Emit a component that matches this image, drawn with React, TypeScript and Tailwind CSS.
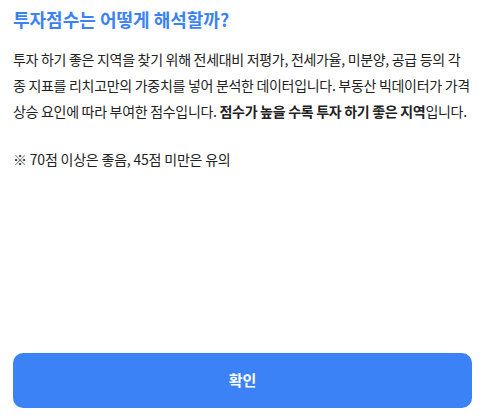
import React from 'react';

export default function App() {
  return (
    <div
      className="flex h-[419px] flex-col bg-white px-[13px] pb-[11px] pt-[5px]"
      style={{ fontFamily: '"Noto Sans CJK KR", "Noto Sans", sans-serif' }}
    >
      <h2 className="text-[18px] font-bold leading-[28px] text-[#3b82f6]">투자점수는 어떻게 해석할까?</h2>

      <p className="mt-[13px] break-keep text-[14px] leading-[26px] tracking-[-0.3px] text-[#222]">
        투자 하기 좋은 지역을 찾기 위해 전세대비 저평가, 전세가율, 미분양, 공급 등의 각 종 지표를 리치고만의 가중치를 넣어
        분석한 데이터입니다. 부동산 빅데이터가 가격 상승 요인에 따라 부여한 점수입니다.{' '}
        <strong className="font-bold">점수가 높을 수록 투자 하기 좋은 지역</strong>입니다.
      </p>

      <p className="mt-[22px] text-[14px] leading-[26px] tracking-[-0.2px] text-[#222]">
        ※ 70점 이상은 좋음, 45점 미만은 유의
      </p>

      <button className="mt-auto flex h-[55px] w-full items-center justify-center rounded-[10px] bg-[#3b82f6] text-[15px] font-bold text-white">
        확인
      </button>
    </div>
  );
}
